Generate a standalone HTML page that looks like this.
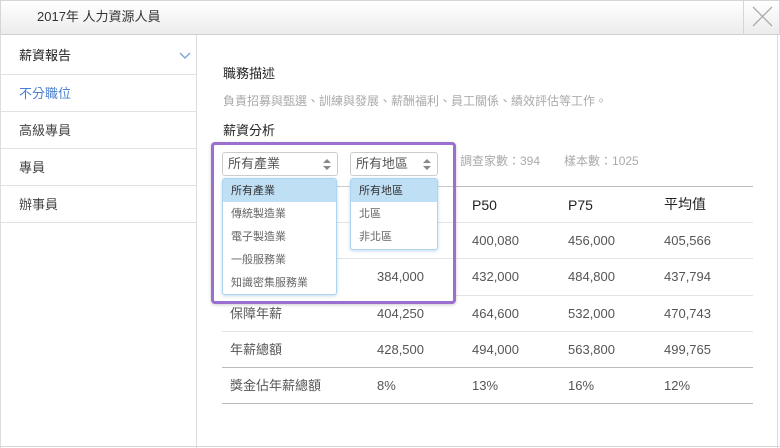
<!DOCTYPE html>
<html><head><meta charset="utf-8"><style>
*{box-sizing:border-box;margin:0;padding:0}
body{width:780px;height:448px;background:#fff;font-family:"Liberation Sans","Noto Sans CJK TC",sans-serif;position:relative;overflow:hidden;color:#333}
.abs{position:absolute}
.hdr{left:0;top:0;width:780px;height:35px;background:linear-gradient(#fff,#ececec);border:1px solid #d6d6d6;border-bottom:1px solid #cfcfcf}
.hdr .t{left:36px;top:5px;font-size:13px;color:#333}
.close{left:743px;top:0;width:36px;height:35px;border-left:1px solid #d6d6d6}
.side{left:0;top:35px;width:197px;height:413px;border-right:1px solid #ddd;border-left:1px solid #ddd}
.it{position:absolute;left:0;width:196px;height:37px;border-bottom:1px solid #e2e2e2;font-size:13px;padding:8px 0 0 18px;color:#444}
.txt{font-size:13px}
.sel{border:1px solid #ccc;border-radius:3px;background:#fff;font-size:13px;color:#555;padding:0 0 0 5px}
.arr{position:absolute;right:6px;top:6px}
.dd{background:#fff;border:1px solid #aed4f0;border-radius:3px;box-shadow:0 1px 3px rgba(100,160,220,.4);font-size:11px;color:#666}
.dd div{height:23px;padding:3px 0 0 8px}
.dd .on{background:#bfdff5;color:#333}
.line{left:222px;width:531px;height:1px;background:#e4e4e4}
.c{font-size:13px;color:#555}
.k{margin-top:-3px}
</style></head><body>
<div class="abs hdr"><div class="abs t">2017年 人力資源人員</div></div>
<div class="abs close"><svg width="36" height="35"><path d="M9 7L28 26M28 7L9 26" stroke="#aaa" stroke-width="1.3" fill="none"/></svg></div>
<div class="abs side">
<div class="it" style="top:0;height:40px;padding-top:10px;color:#222">薪資報告<svg style="position:absolute;left:178px;top:17px" width="12" height="8"><path d="M1 1L6 6L11 1" stroke="#7aa6d6" stroke-width="1.4" fill="none"/></svg></div>
<div class="it" style="top:40px;color:#4a7fd0">不分職位</div>
<div class="it" style="top:77px">高級專員</div>
<div class="it" style="top:114px">專員</div>
<div class="it" style="top:151px">辦事員</div>
</div>
<div class="abs" style="left:777px;top:35px;width:2px;height:413px;border-left:1px solid #ddd"></div>
<div class="abs" style="left:0;top:446px;width:780px;height:1px;background:#d6d6d6"></div>
<div class="abs txt" style="left:223px;top:63px;color:#222">職務描述</div>
<div class="abs" style="left:223px;top:92px;font-size:12px;color:#aaa">負責招募與甄選、訓練與發展、薪酬福利、員工關係、績效評估等工作。</div>
<div class="abs txt" style="left:223px;top:120px;color:#222">薪資分析</div>
<div class="abs" style="left:460px;top:152px;font-size:12px;color:#aaa">調查家數：394　　樣本數：1025</div>
<div class="abs line" style="top:186px;background:#bbb"></div>
<div class="abs line" style="top:222px"></div>
<div class="abs line" style="top:258px"></div>
<div class="abs line" style="top:295px"></div>
<div class="abs line" style="top:331px"></div>
<div class="abs line" style="top:367px;background:#bbb"></div>
<div class="abs line" style="top:403px;background:#bbb"></div>
<div class="abs c" style="left:472px;top:197px;color:#222;font-size:14px">P50</div>
<div class="abs c" style="left:568px;top:197px;color:#222;font-size:14px">P75</div>
<div class="abs c" style="left:664px;top:194px;color:#222;font-size:14px">平均值</div>
<div class="abs c" style="left:472px;top:233px">400,080</div><div class="abs c" style="left:568px;top:233px">456,000</div><div class="abs c" style="left:664px;top:233px">405,566</div>
<div class="abs c" style="left:472px;top:269px">432,000</div><div class="abs c" style="left:568px;top:269px">484,800</div><div class="abs c" style="left:664px;top:269px">437,794</div>
<div class="abs c" style="left:230px;top:303px">保障年薪</div><div class="abs c" style="left:377px;top:306px">404,250</div><div class="abs c" style="left:472px;top:306px">464,600</div><div class="abs c" style="left:568px;top:306px">532,000</div><div class="abs c" style="left:664px;top:306px">470,743</div>
<div class="abs c" style="left:230px;top:339px">年薪總額</div><div class="abs c" style="left:377px;top:342px">428,500</div><div class="abs c" style="left:472px;top:342px">494,000</div><div class="abs c" style="left:568px;top:342px">563,800</div><div class="abs c" style="left:664px;top:342px">499,765</div>
<div class="abs c" style="left:230px;top:375px">獎金佔年薪總額</div><div class="abs c" style="left:377px;top:378px">8%</div><div class="abs c" style="left:472px;top:378px">13%</div><div class="abs c" style="left:568px;top:378px">16%</div><div class="abs c" style="left:664px;top:378px">12%</div>
<div class="abs" style="left:211px;top:142px;width:245px;height:162px;border:3px solid #9b6fd0;border-radius:4px;background:#fff;box-shadow:0 1px 3px rgba(0,0,0,.2)"></div>
<div class="abs line" style="left:337px;width:14px;top:186px;background:#ccc"></div>
<div class="abs line" style="left:438px;width:15px;top:186px;background:#ccc"></div>
<div class="abs line" style="left:337px;width:116px;top:222px"></div>
<div class="abs line" style="left:337px;width:116px;top:258px"></div>
<div class="abs c" style="left:377px;top:269px">384,000</div>
<div class="abs sel" style="left:222px;top:152px;width:116px;height:24px">所有產業<svg class="arr" width="8" height="11"><path d="M0 4L4 0L8 4ZM0 7L4 11L8 7Z" fill="#888"/></svg></div>
<div class="abs sel" style="left:350px;top:152px;width:88px;height:24px">所有地區<svg class="arr" width="8" height="11"><path d="M0 4L4 0L8 4ZM0 7L4 11L8 7Z" fill="#888"/></svg></div>
<div class="abs dd" style="left:222px;top:178px;width:115px;height:117px"><div class="on">所有產業</div><div>傳統製造業</div><div>電子製造業</div><div>一般服務業</div><div>知識密集服務業</div></div>
<div class="abs dd" style="left:350px;top:178px;width:88px;height:72px"><div class="on">所有地區</div><div>北區</div><div>非北區</div></div>
</body></html>
